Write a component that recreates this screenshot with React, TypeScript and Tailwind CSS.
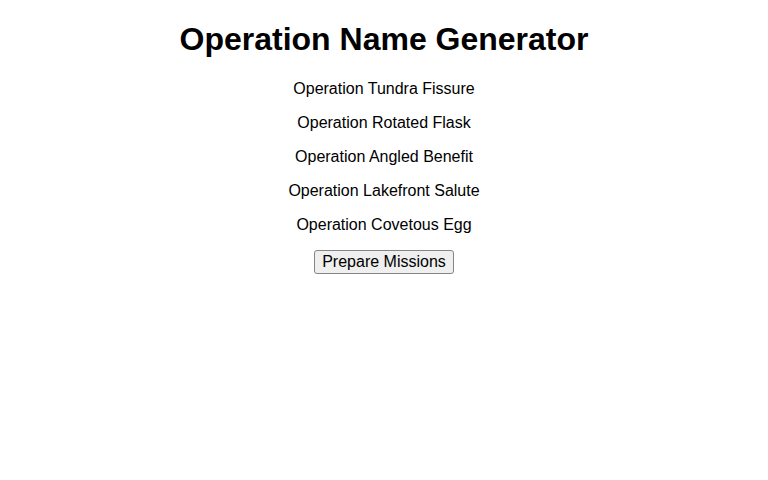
import React from "react";

const names = [
  "Operation Tundra Fissure",
  "Operation Rotated Flask",
  "Operation Angled Benefit",
  "Operation Lakefront Salute",
  "Operation Covetous Egg",
];

export default function App() {
  return (
    <div
      className="min-h-[480px] w-full bg-white text-black text-center"
      style={{ fontFamily: '"Liberation Sans", Arial, sans-serif' }}
    >
      <div className="flow-root">
        <h1 className="mt-[21.44px] mb-[21.44px] text-[32px] font-bold leading-[normal]">
          Operation Name Generator
        </h1>
        <div className="flex flex-col gap-4">
          {names.map((n) => (
            <p key={n} className="text-[16px] leading-[normal]">
              {n}
            </p>
          ))}
        </div>
        <div className="mt-4">
          <button className="text-[16px] leading-[normal] px-[7px] py-[2px] border border-[#858585] rounded-[3px] bg-[#efefef] text-black">
            Prepare Missions
          </button>
        </div>
      </div>
    </div>
  );
}
